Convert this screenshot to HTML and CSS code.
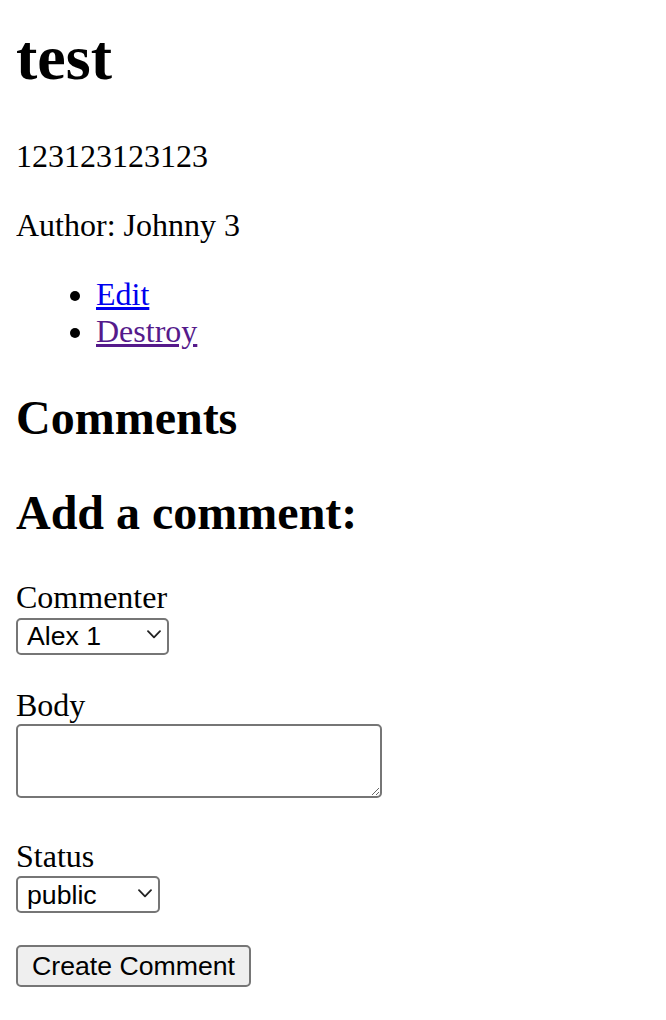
FILE: index.html
```html
<!DOCTYPE html>
<html lang="en">
<head>
<meta charset="utf-8">
<title>test</title>
<link rel="stylesheet" href="styles.css">
</head>
<body>
<h1 class="title">test</h1>
<p class="text">123123123123</p>
<p class="text">Author: Johnny 3</p>
<ul class="actions">
  <li><a class="link" href="#edit">Edit</a></li>
  <li><a class="link link-visited" href="#destroy">Destroy</a></li>
</ul>
<h2 class="section">Comments</h2>
<h2 class="section">Add a comment:</h2>
<form class="comment-form" action="#" onsubmit="return false">
  <p class="field">
    <label class="label" for="commenter">Commenter</label><br>
    <span class="select-wrap"><select id="commenter" class="select select-commenter"><option>Alex 1</option><option>Johnny 3</option></select><svg class="chevron" width="14" height="9" viewBox="0 0 14 9" aria-hidden="true"><path d="M1 1.2 L7 7.4 L13 1.2" fill="none" stroke="#222" stroke-width="1.8" stroke-linecap="round" stroke-linejoin="round"/></svg></span>
  </p>
  <p class="field">
    <label class="label" for="body">Body</label><br>
    <textarea id="body" class="textarea"></textarea>
  </p>
  <p class="field">
    <label class="label" for="status">Status</label><br>
    <span class="select-wrap"><select id="status" class="select select-status"><option>public</option><option>private</option><option>archived</option></select><svg class="chevron" width="14" height="9" viewBox="0 0 14 9" aria-hidden="true"><path d="M1 1.2 L7 7.4 L13 1.2" fill="none" stroke="#222" stroke-width="1.8" stroke-linecap="round" stroke-linejoin="round"/></svg></span>
  </p>
  <p class="field">
    <button type="submit" class="button">Create Comment</button>
  </p>
</form>
</body>
</html>
```
FILE: styles.css
```css
html {
  background: #ffffff;
}

body {
  margin: 0 16px 16px 16px;
  font-family: "Liberation Serif", "Times New Roman", serif;
  font-size: 32px;
  color: #000000;
}

.title {
  font-size: 64px;
  font-weight: bold;
  margin: 21px 0 42.88px 0;
}

.text {
  margin: 32px 0;
}

.actions {
  margin: 32px 0;
  padding-left: 80px;
  list-style: disc;
}

.link {
  color: #0000ee;
  text-decoration: underline;
}

.link-visited {
  color: #551a8b;
}

.section {
  font-size: 48px;
  font-weight: bold;
  margin: 39.84px 0;
}

.comment-form {
  margin: 0;
}

.field {
  margin: 32px 0;
}

.label {
  font-family: inherit;
}

.select-wrap {
  position: relative;
  display: inline-block;
}

.select {
  -webkit-appearance: none;
  appearance: none;
  box-sizing: border-box;
  height: 37px;
  margin: 0;
  padding: 0 30px 0 9px;
  border: 2px solid #767676;
  border-radius: 5px;
  background: #ffffff;
  color: #000000;
  font-family: "Liberation Sans", Arial, sans-serif;
  font-size: 26.67px;
}

.select-commenter {
  width: 153px;
}

.select-status {
  width: 144px;
}

.chevron {
  position: absolute;
  right: 8px;
  top: 14px;
  pointer-events: none;
}

.textarea {
  box-sizing: border-box;
  width: 366px;
  height: 74px;
  margin: 0;
  padding: 4px;
  border: 2px solid #767676;
  border-radius: 5px;
  background: #ffffff;
  font-family: "Liberation Mono", monospace;
  font-size: 26.67px;
  vertical-align: baseline;
  resize: both;
}

.button {
  box-sizing: border-box;
  width: 235px;
  height: 42px;
  margin: 0;
  padding: 0 12px;
  border: 2px solid #767676;
  border-radius: 5px;
  background: #efefef;
  color: #000000;
  font-family: "Liberation Sans", Arial, sans-serif;
  font-size: 26.67px;
}
```
